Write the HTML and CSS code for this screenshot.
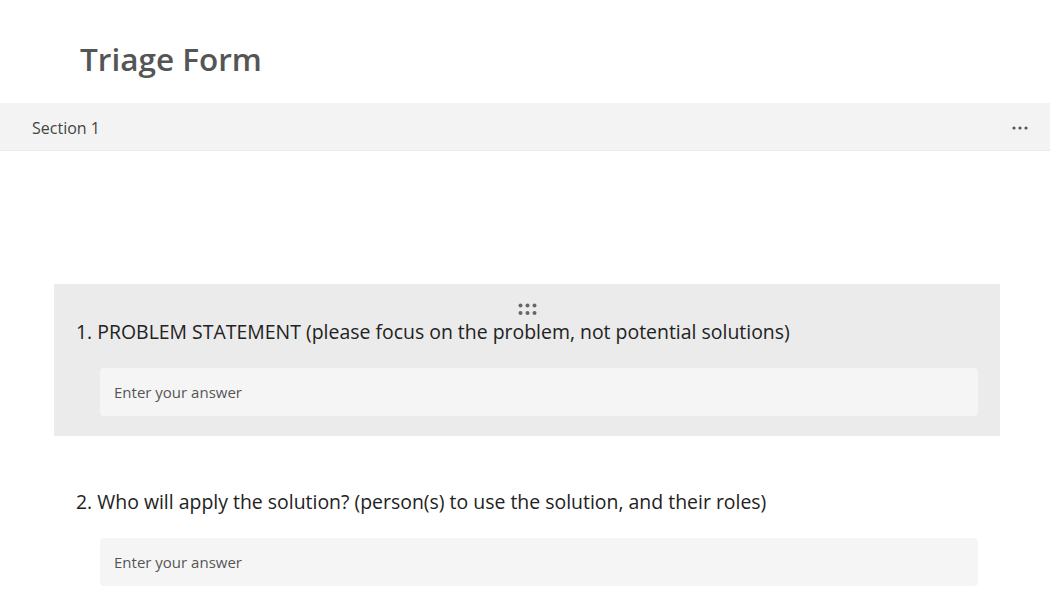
FILE: index.html
```html
<!DOCTYPE html>
<html lang="en">
<head>
<meta charset="UTF-8">
<meta name="viewport" content="width=device-width, initial-scale=1.0">
<title>Triage Form</title>
<link rel="stylesheet" href="styles.css">
</head>
<body>
    <header class="form-header">
        <h1 class="form-title">Triage Form</h1>
    </header>

    <div class="section-bar">
        <span class="section-name">Section 1</span>
        <span class="section-more">
            <svg width="16" height="4" viewBox="0 0 16 4"><circle cx="2" cy="2" r="1.6"/><circle cx="8" cy="2" r="1.6"/><circle cx="14" cy="2" r="1.6"/></svg>
        </span>
    </div>

    <main class="questions">
        <div class="question active">
            <div class="drag-handle">
                <svg width="19" height="13" viewBox="0 0 19 13"><circle cx="2.5" cy="2.5" r="2"/><circle cx="9.5" cy="2.5" r="2"/><circle cx="16.5" cy="2.5" r="2"/><circle cx="2.5" cy="10" r="2"/><circle cx="9.5" cy="10" r="2"/><circle cx="16.5" cy="10" r="2"/></svg>
            </div>
            <div class="question-title">1. PROBLEM STATEMENT (please focus on the problem, not potential solutions)</div>
            <input class="answer" type="text" placeholder="Enter your answer">
        </div>

        <div class="question">
            <div class="drag-handle"></div>
            <div class="question-title">2. Who will apply the solution? (person(s) to use the solution, and their roles)</div>
            <input class="answer" type="text" placeholder="Enter your answer">
        </div>
    </main>
</body>
</html>
```

FILE: styles.css
```css
body {
    font-family: "Open Sans", "Noto Sans", sans-serif;
    margin: 0;
    padding: 0;
    background: #fff;
    color: #222;
}
.form-header {
    height: 103px;
    padding-left: 80px;
    box-sizing: border-box;
}
.form-title {
    margin: 0;
    padding-top: 37px;
    font-size: 31.5px;
    font-weight: 600;
    color: #555;
    line-height: 44px;
}
.section-bar {
    height: 48px;
    background: #f3f3f3;
    border-bottom: 1px solid #ececec;
    box-sizing: border-box;
    display: flex;
    align-items: center;
    justify-content: space-between;
    padding: 2px 22px 0 32px;
}
.section-name {
    font-size: 16px;
    color: #444;
}
.section-more svg {
    display: block;
    fill: #555;
}
.questions {
    margin: 133px 50px 0 54px;
    display: flex;
    flex-direction: column;
    gap: 18px;
}
.question {
    height: 152px;
    box-sizing: border-box;
    padding: 0 22px;
}
.question.active {
    background: #ebebeb;
}
.drag-handle {
    height: 32px;
    display: flex;
    justify-content: center;
    align-items: flex-end;
}
.drag-handle svg {
    display: block;
    fill: #666;
}
.question-title {
    font-size: 19.45px;
    line-height: 30px;
    margin-top: 1px;
}
.answer {
    display: block;
    box-sizing: border-box;
    width: calc(100% - 24px);
    margin: 21px 0 0 24px;
    height: 48px;
    border: none;
    border-radius: 4px;
    background: #f5f5f5;
    padding: 0 14px;
    font-family: inherit;
    font-size: 15px;
    color: #222;
}
.answer::placeholder {
    color: #555;
}
```
